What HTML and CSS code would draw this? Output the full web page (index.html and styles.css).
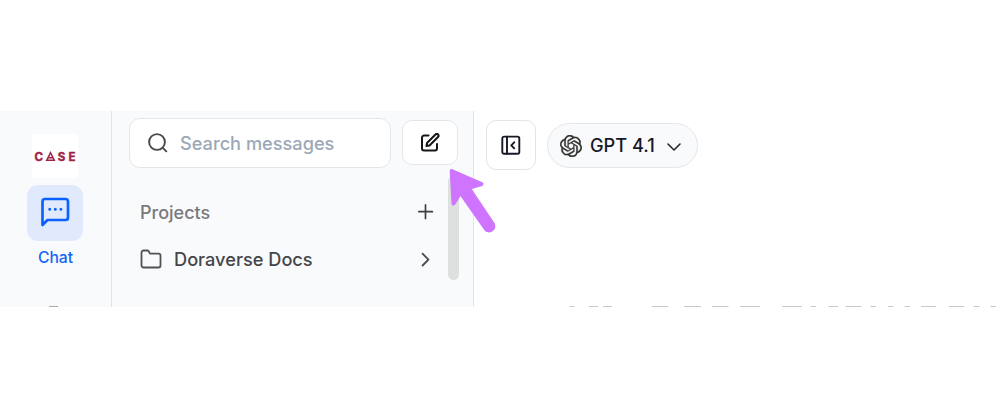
FILE: index.html
```html
<!DOCTYPE html>
<html lang="en">
<head>
<meta charset="utf-8">
<title>Chat</title>
<link rel="stylesheet" href="styles.css">
</head>
<body>
<div class="app">
  <nav class="rail">
    <div class="logo">
      <svg width="46" height="44" viewBox="0 0 46 44">
        <g class="logo-text"><text x="2.4" y="26.8">C</text><text x="25.8" y="26.8">S</text><text x="36.5" y="26.8">E</text></g>
        <path d="M14.700 26.300 18.500 18.700 22.300 26.300ZM16.300 23.700h4.400" fill="none" stroke="#a02349" stroke-width="1.500"/>
      </svg>
    </div>
    <div class="tile">
      <svg width="32" height="32" viewBox="0 0 32 32" fill="none" stroke="#0b62ff" stroke-width="2.700" stroke-linejoin="round">
        <path d="M3.500 29V5.500a2.500 2.500 0 0 1 2.500-2.500H26.500a2.500 2.500 0 0 1 2.500 2.500V21.500a2.500 2.500 0 0 1-2.500 2.500H8.500Z"/>
        <path d="M10.700 13.300h.01M16.300 13.300h.01M21.900 13.300h.01" stroke-width="3" stroke-linecap="round"/>
      </svg>
    </div>
    <div class="tile-label">Chat</div>
    <div class="rail-next"></div>
  </nav>
  <aside class="panel">
    <div class="tools">
      <div class="search">
        <svg width="22" height="22" viewBox="0 0 22 22" fill="none" stroke="#484848" stroke-width="1.9" stroke-linecap="round"><circle cx="10" cy="10" r="7.900"/><path d="m15.800 15.800 3.500 3.500"/></svg>
        <span>Search messages</span>
      </div>
      <div class="compose">
        <svg width="20" height="20" viewBox="0 0 20 20" fill="none" stroke="#171717" stroke-width="2" stroke-linejoin="round" stroke-linecap="round"><path d="M8.500 2.500H4a2 2 0 0 0-2 2v11a2 2 0 0 0 2 2h11a2 2 0 0 0 2-2v-4.500"/><path d="M7 10 15.500 1.500a1.700 1.700 0 0 1 2.500 2.500L9.500 12.500 6.500 13Z"/></svg>
      </div>
    </div>
    <div class="row heading">
      <span>Projects</span>
      <svg width="16" height="16" viewBox="0 0 16 16" fill="none" stroke="#3e3f42" stroke-width="1.700" stroke-linecap="round"><path d="M7.500 .9v13.600M.8 7.700h13.600"/></svg>
    </div>
    <div class="row project">
      <svg width="22" height="20" viewBox="0 0 22 20" fill="none" stroke="#505155" stroke-width="1.800" stroke-linejoin="round"><path d="M1.500 3.500a2 2 0 0 1 2-2h3.700a1.800 1.800 0 0 1 1.500.8l1 1.600a1.800 1.800 0 0 0 1.500.8h7.300a2 2 0 0 1 2 2v9.800a2 2 0 0 1-2 2h-15a2 2 0 0 1-2-2Z"/></svg>
      <span>Doraverse Docs</span>
      <svg class="chevron" width="16" height="16" viewBox="0 0 16 16" fill="none" stroke="#48494d" stroke-width="1.800" stroke-linecap="round" stroke-linejoin="round"><path d="m4.600 2.700 5.800 5.900-5.800 5.900"/></svg>
    </div>
    <div class="scrollbar"></div>
  </aside>
  <main class="main">
    <div class="topbar">
      <div class="toggle">
        <svg width="20" height="20" viewBox="0 0 20 20" fill="none" stroke="#171a26" stroke-width="1.900" stroke-linejoin="round" stroke-linecap="round"><rect x="1.300" y="1.600" width="17" height="17.200" rx="1.800"/><path d="M6 1.600v17.200M13.200 7.300l-2.900 3 2.900 3"/></svg>
      </div>
      <div class="model">
        <svg width="22" height="22" viewBox="0 0 24 24" fill="#30302d" stroke="#30302d" stroke-width=".3"><path d="M22.2819 9.8211a5.9847 5.9847 0 0 0-.5157-4.9108 6.0462 6.0462 0 0 0-6.5098-2.9A6.0651 6.0651 0 0 0 4.9807 4.1818a5.9847 5.9847 0 0 0-3.9977 2.9 6.0462 6.0462 0 0 0 .7427 7.0966 5.98 5.98 0 0 0 .511 4.9107 6.051 6.051 0 0 0 6.5146 2.9001A5.9847 5.9847 0 0 0 13.2599 24a6.0557 6.0557 0 0 0 5.7718-4.2058 5.9894 5.9894 0 0 0 3.9977-2.9001 6.0557 6.0557 0 0 0-.7475-7.0729zm-9.022 12.6081a4.4755 4.4755 0 0 1-2.8764-1.0408l.1419-.0804 4.7783-2.7582a.7948.7948 0 0 0 .3927-.6813v-6.7369l2.02 1.1686a.071.071 0 0 1 .038.052v5.5826a4.504 4.504 0 0 1-4.4945 4.4944zm-9.6607-4.1254a4.4708 4.4708 0 0 1-.5346-3.0137l.142.0852 4.783 2.7582a.7712.7712 0 0 0 .7806 0l5.8428-3.3685v2.3324a.0804.0804 0 0 1-.0332.0615L9.74 19.9502a4.4992 4.4992 0 0 1-6.1408-1.6464zM2.3408 7.8956a4.485 4.485 0 0 1 2.3655-1.9728V11.6a.7664.7664 0 0 0 .3879.6765l5.8144 3.3543-2.0201 1.1685a.0757.0757 0 0 1-.071 0l-4.8303-2.7865A4.504 4.504 0 0 1 2.3408 7.872zm16.5963 3.8558L13.1038 8.364 15.1192 7.2a.0757.0757 0 0 1 .071 0l4.8303 2.7913a4.4944 4.4944 0 0 1-.6765 8.1042v-5.6772a.79.79 0 0 0-.407-.667zm2.0107-3.0231l-.142-.0852-4.7735-2.7818a.7759.7759 0 0 0-.7854 0L9.409 9.2297V6.8974a.0662.0662 0 0 1 .0284-.0615l4.8303-2.7866a4.4992 4.4992 0 0 1 6.6802 4.66zM8.3065 12.863l-2.02-1.1638a.0804.0804 0 0 1-.038-.0567V6.0742a4.4992 4.4992 0 0 1 7.3757-3.4537l-.142.0805L8.704 5.459a.7948.7948 0 0 0-.3927.6813zm1.0976-2.3654l2.602-1.4998 2.6069 1.4998v2.9994l-2.5974 1.4997-2.6067-1.4997Z"/></svg>
        <span>GPT 4.1</span>
        <svg class="caret" width="16" height="16" viewBox="0 0 16 16" fill="none" stroke="#252833" stroke-width="1.600" stroke-linecap="round" stroke-linejoin="round"><path d="m2 6 6 6 6-6"/></svg>
      </div>
    </div>
    <!-- upper edge of the content that scrolls below the fold -->
    <svg class="edge" width="526" height="1" viewBox="474 0 526 1" fill="none" stroke="#c9c9c9"><path d="M569.500.5h5M589 .5h9M603 .5h9M651.500.5h17M684 .5h17M712 .5h16.500M740 .5h20M782 .5h20M810.500.5h5.500M828.500.5h9.500M845.500.5h16M870.500.5h5.500M888 .5h5.500M904.500.5h5.500M921 .5h15M949 .5h15.500M973.500.5h6M990.500.5h5.500"/></svg>
  </main>
</div>
<svg class="pointer" width="60" height="80" viewBox="440 160 60 80"><path d="M451.700 171 481.500 184 468.500 187.800 492.500 223.500a4 4 0 0 1-6.800 5.200L460.500 192.500 453.500 203.500Z" fill="#ce74ff" stroke="#ce74ff" stroke-width="4" stroke-linejoin="round"/></svg>
</body>
</html>
```
FILE: styles.css
```css
* { box-sizing: border-box; }
body { margin: 0; background: #fff; font-family: Inter, "Liberation Sans", sans-serif; overflow: hidden; height: 400px; }
svg { display: block; flex: none; }
.app { display: grid; grid-template-columns: 112px 362px 1fr; height: 196px; margin-top: 111px; }
.rail { display: flex; flex-direction: column; align-items: center; padding: 23px 0 0; background: #f9fafc; border-right: 1px solid #e2e4e7; height: 196px; }
.logo { background: #fff; width: 46px; height: 44px; margin-right: 1px; }
.logo-text { font: 700 11.500px Inter, sans-serif; fill: #a02349; stroke: #a02349; stroke-width: .4px; }
.tile { display: grid; place-items: center; width: 56px; height: 56px; margin: 7px 1px 0 0; border-radius: 11px; background: #e1eafc; }
.tile svg { margin-top: -2px; }
.tile-label { margin: 7px 0 0; font-size: 15.700px; font-weight: 500; line-height: 20px; color: #1465f5; }
.rail-next { width: 9px; height: 1px; margin: auto 5px 0 0; background: #aaa; }
.panel { position: relative; height: 196px; background: #f9fafc; border-right: 1px solid #e2e4e7; padding: 7px 15px 0 17px; }
.tools { display: flex; align-items: flex-start; gap: 11px; }
.search { display: flex; align-items: center; gap: 11px; width: 262px; height: 50px; padding-left: 17px; background: #fff; border: 1px solid #e4e6ea; border-radius: 11px; color: #9ba8b7; font-size: 18.200px; font-weight: 450; }
.compose { display: grid; place-items: center; width: 56px; height: 45px; margin-top: 2px; background: #fff; border: 1px solid #e4e6ea; border-radius: 10px; }
.row { display: flex; align-items: center; font-size: 18px; }
.heading { justify-content: space-between; height: 24px; margin: 32px 24px 0 11px; color: #79797b; font-weight: 500; }
.project { height: 24px; margin: 23px 24px 0 11px; gap: 12px; color: #45464a; font-size: 18.200px; font-weight: 500; }
.chevron { margin-left: auto; }
.search span { padding-bottom: 1px; }
.scrollbar { position: absolute; left: 336px; top: 65px; width: 11px; height: 104px; border-radius: 6px; background: #dee0e0; }
.main { display: flex; flex-direction: column; padding: 9px 0 0; }
.topbar { display: flex; align-items: flex-start; gap: 11px; padding-left: 12px; }
.toggle { display: grid; place-items: center; width: 50px; height: 50px; border: 1px solid #e3e4e6; border-radius: 10px; }
.model { display: flex; align-items: center; width: 151px; height: 45px; margin-top: 3px; padding-left: 12px; border: 1px solid #e4e6ea; border-radius: 23px; background: #f9fafc; color: #141827; font-size: 18.200px; font-weight: 500; }
.model span { margin-left: 8px; padding-bottom: 2px; }
.caret { margin-left: 11px; }
.edge { margin-top: auto; }
.pointer { position: absolute; left: 440px; top: 160px; }
```
